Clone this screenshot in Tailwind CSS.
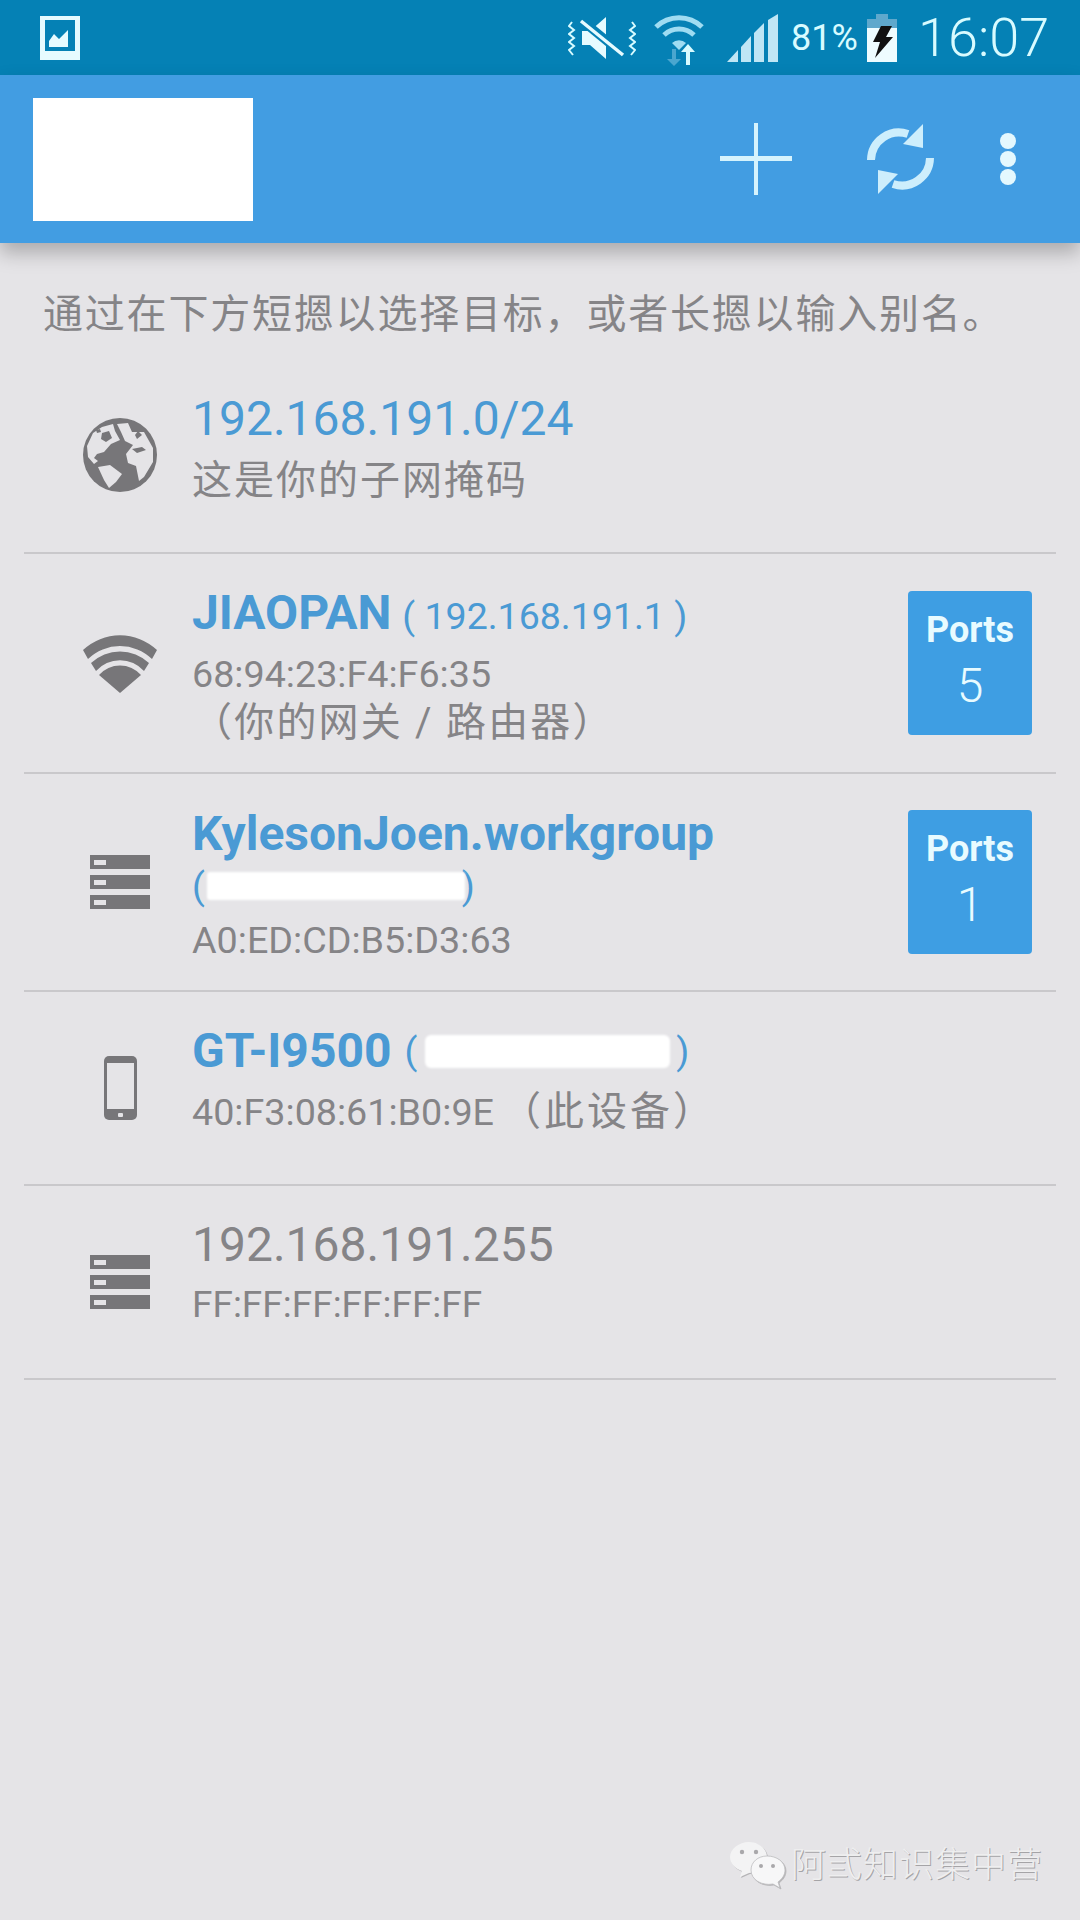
<!DOCTYPE html>
<html lang="zh-CN">

<head>
    <meta charset="UTF-8">
    <meta name="viewport" content="width=device-width, initial-scale=1.0">
    <title>网络扫描</title>
    <script src="https://cdn.jsdelivr.net/npm/@tailwindcss/browser@4"></script>
</head>

<body class="bg-[#e5e4e7] font-['Roboto','Noto_Sans_CJK_SC',sans-serif] text-[#858487]">
    <div class="relative h-[1920px] w-[1080px] overflow-hidden">

        <!-- status bar -->
        <div class="flex h-[75px] items-center bg-[#0581b5] text-[#d8fbff]">
            <svg class="ml-[40px] h-[44px] w-[40px]" viewBox="0 0 40 44">
                <rect width="40" height="44" fill="#e6fbff" />
                <rect x="5" y="4" width="30" height="31" fill="#0581b5" />
                <path d="M9 31v-6l5-7 5 5 9-9v17z" fill="#e6fbff" />
            </svg>
            <svg class="ml-[488px] h-[44px] w-[68px]" viewBox="0 0 68 44" fill="none">
                <path d="M4 6l-3 4 5 4-5 4 5 4-5 4 5 4-5 4 4 5M64 6l3 4-5 4 5 4-5 4 5 4-5 4 5 4-4 5" stroke="#d8fbff" stroke-width="2" />
                <path d="M14 15h8l16-14v42L22 29h-8z" fill="#e6fbff" />
                <path d="M12 3l44 36" stroke="#0581b5" stroke-width="9" />
                <path d="M13 5l42 34" stroke="#e6fbff" stroke-width="3.5" />
            </svg>
            <svg class="ml-[18px] h-[56px] w-[50px]" viewBox="0 0 50 56" fill="none">
                <path d="M2 17a33 33 0 0 1 46 0" stroke="#9fdcf2" stroke-width="5" />
                <path d="M10 25a22 22 0 0 1 30 0" stroke="#9fdcf2" stroke-width="5" />
                <path d="M18 33a10 10 0 0 1 14 0l-7 7z" fill="#9fdcf2" />
                <path d="M18 39v10h-5l7 7 7-7h-5V39z" fill="#4aa6cf" />
                <path d="M32 55V42h-5l7-8 7 8h-5v13z" fill="#d8fbff" />
            </svg>
            <svg class="ml-[23px] h-[48px] w-[53px]" viewBox="0 0 53 48">
                <path d="M0 48l11-12v12z" fill="#bfe6f5" />
                <path d="M14 33l10-11v26H14z" fill="#bfe6f5" />
                <path d="M27 19l10-10v39H27z" fill="#bfe6f5" />
                <path d="M41 6l10-6v48H41z" fill="#bfe6f5" />
            </svg>
            <span class="ml-[11px] w-[65px] text-[36px] leading-none">81%</span>
            <svg class="ml-[11px] h-[48px] w-[30px]" viewBox="0 0 30 48">
                <rect x="9" y="0" width="12" height="6" fill="#5fa8cc" />
                <rect x="0" y="5" width="30" height="9" fill="#5fa8cc" />
                <rect x="0" y="14" width="30" height="34" fill="#eefcff" />
                <path d="M14 12h11l-6 11h7L8 44l5-16H6z" fill="#111" />
            </svg>
            <span class="ml-[21px] text-[54px] leading-none font-light">16:07</span>
        </div>

        <!-- app bar -->
        <div class="relative z-10 flex h-[168px] items-center bg-[#429de2] shadow-[0_10px_18px_rgba(0,0,0,0.25)]">
            <div class="ml-[33px] h-[123px] w-[220px] bg-white"></div>
            <svg class="ml-[467px] h-[72px] w-[72px]" viewBox="0 0 72 72" fill="#d5f3fd">
                <rect x="34" y="0" width="4" height="72" />
                <rect x="0" y="33" width="72" height="5" />
            </svg>
            <svg class="ml-[74px] h-[72px] w-[69px]" viewBox="0 0 69 72" fill="none">
                <path d="M5 37A28 28 0 0 1 42 11" stroke="#cdeefc" stroke-width="8" />
                <path d="M57 1v24l-20-4z" fill="#cdeefc" />
                <path d="M64 35A28 28 0 0 1 27 61" stroke="#cdeefc" stroke-width="8" />
                <path d="M12 71V47l20 4z" fill="#cdeefc" />
            </svg>
            <div class="ml-[65px] flex flex-col gap-[2px]">
                <div class="h-[16px] w-[16px] rounded-full bg-[#e4f8fe]"></div>
                <div class="h-[16px] w-[16px] rounded-full bg-[#e4f8fe]"></div>
                <div class="h-[16px] w-[16px] rounded-full bg-[#e4f8fe]"></div>
            </div>
        </div>

        <!-- hint -->
        <p class="h-[115px] pt-[52px] pl-[43px] text-[40px] leading-[40px] tracking-[1.8px] whitespace-nowrap">通过在下方短摁以选择目标，或者长摁以输入别名。</p>

        <!-- host list -->
        <div class="mx-[24px]">
            <div class="flex h-[196px] border-b-2 border-[#c9c8cb]">
                <div class="flex w-[168px] shrink-0 items-center justify-center pl-[24px]">
                    <svg class="h-[74px] w-[74px]" viewBox="23 19 74 74">
                        <circle cx="60" cy="56" r="37" fill="#777679" />
                        <path d="M27 47l6-13 9-6 11-3 2 7 5 9-9 4-7 8-7 2-3 4 4 3-4 3-6-7z" fill="#e5e4e7" />
                        <path d="M57 25l11-1 4 9 12 0 9 16v14l-9 15-5 4-3-15-8-3-2-9 7-9-8-4-4-9z" fill="#e5e4e7" />
                        <path d="M38 68l12-2 12 9-6 8-7 6-5-8z" fill="#e5e4e7" />
                        <path d="M42 34l7-2 3 7-6 4-5-3zM72 50l10-2 4 3-9 3zM36 31l4-1 1 3-4 1zM78 32l4 4-5 4-2-4z" fill="#777679" />
                    </svg>
                </div>
                <div class="flex-1 pt-[30px]">
                    <div class="text-[48px] leading-[62px] text-[#4a9ad4]">192.168.191.0/24</div>
                    <div class="text-[40px] leading-[62px] tracking-[2px]">这是你的子网掩码</div>
                </div>
            </div>

            <div class="flex h-[220px] items-center border-b-2 border-[#c9c8cb]">
                <div class="flex w-[168px] shrink-0 justify-center pl-[24px]">
                    <svg class="h-[60px] w-[74px]" viewBox="0 0 74 60">
                        <path d="M0 17a54 54 0 0 1 74 0l-5 9A46 46 0 0 0 5 26z" fill="#777679" />
                        <path d="M8 30a42 42 0 0 1 58 0l-5 8a32 32 0 0 0-48 0z" fill="#777679" />
                        <path d="M16 42a28 28 0 0 1 42 0L37 60z" fill="#777679" />
                    </svg>
                </div>
                <div class="flex-1 self-start pt-[29px]">
                    <div class="h-[60px] leading-[60px] whitespace-nowrap text-[#4a9ad4]">
                        <span class="text-[48px] font-bold">JIAOPAN</span>
                        <span class="ml-[7px] text-[37.5px]">( 192.168.191.1 )</span>
                    </div>
                    <div class="text-[37.7px] leading-[62px]">68:94:23:F4:F6:35</div>
                    <div class="text-[40px] leading-[36px] tracking-[2.2px] whitespace-pre">（你的网关 / 路由器）</div>
                </div>
                <div class="mr-[24px] flex h-[144px] w-[124px] flex-col items-center rounded-[4px] bg-[#3e9ee3] pt-[14px] text-[#e8fbff]">
                    <span class="text-[36px] leading-[50px] font-bold">Ports</span>
                    <span class="text-[48px] leading-[62px] font-light">5</span>
                </div>
            </div>

            <div class="flex h-[218px] items-center border-b-2 border-[#c9c8cb]">
                <div class="flex w-[168px] shrink-0 justify-center pl-[24px]">
                    <svg class="h-[54px] w-[60px]" viewBox="0 0 60 54">
                        <path d="M0 0h60v14H0zM0 20h60v14H0zM0 40h60v14H0z" fill="#777679" />
                        <path d="M4 5h12v5H4zM4 25h12v5H4zM4 45h12v5H4z" fill="#e5e4e7" />
                    </svg>
                </div>
                <div class="flex-1 self-start pt-[32px]">
                    <div class="text-[48px] leading-[56px] font-bold text-[#4a9ad4]">KylesonJoen.workgroup</div>
                    <div class="flex h-[48px] items-center text-[37.5px] leading-[48px] text-[#4a9ad4]">
                        <span>(</span>
                        <span class="ml-[2px] h-[28px] w-[258px] rounded-[3px] bg-white blur-[1px]"></span>
                        <span class="-ml-[3px]">)</span>
                    </div>
                    <div class="text-[37.7px] leading-[60px]">A0:ED:CD:B5:D3:63</div>
                </div>
                <div class="mr-[24px] flex h-[144px] w-[124px] flex-col items-center rounded-[4px] bg-[#3e9ee3] pt-[14px] text-[#e8fbff]">
                    <span class="text-[36px] leading-[50px] font-bold">Ports</span>
                    <span class="text-[48px] leading-[62px] font-light">1</span>
                </div>
            </div>

            <div class="flex h-[194px] items-center border-b-2 border-[#c9c8cb]">
                <div class="flex w-[168px] shrink-0 justify-center pl-[24px]">
                    <svg class="h-[64px] w-[33px]" viewBox="0 0 33 64">
                        <rect width="33" height="64" rx="5" fill="#777679" />
                        <rect x="3" y="7" width="27" height="46" fill="#e5e4e7" />
                        <rect x="14" y="57" width="5" height="4" rx="1" fill="#e5e4e7" />
                    </svg>
                </div>
                <div class="flex-1 self-start pt-[29px]">
                    <div class="flex h-[60px] items-center whitespace-nowrap text-[#4a9ad4]">
                        <span class="text-[48px] font-bold">GT-I9500</span>
                        <span class="ml-[13px] text-[37.5px]">(</span>
                        <span class="ml-[8px] h-[33px] w-[245px] rounded-[6px] bg-white blur-[1px]"></span>
                        <span class="ml-[6px] text-[37.5px]">)</span>
                    </div>
                    <div class="text-[37.7px] leading-[62px]">40:F3:08:61:B0:9E<span class="ml-[7px] text-[40px] tracking-[3px]">（此设备）</span></div>
                </div>
            </div>

            <div class="flex h-[194px] items-center border-b-2 border-[#c9c8cb]">
                <div class="flex w-[168px] shrink-0 justify-center pl-[24px]">
                    <svg class="h-[54px] w-[60px]" viewBox="0 0 60 54">
                        <path d="M0 0h60v14H0zM0 20h60v14H0zM0 40h60v14H0z" fill="#777679" />
                        <path d="M4 5h12v5H4zM4 25h12v5H4zM4 45h12v5H4z" fill="#e5e4e7" />
                    </svg>
                </div>
                <div class="flex-1 self-start pt-[29px]">
                    <div class="text-[48px] leading-[60px]">192.168.191.255</div>
                    <div class="text-[37px] leading-[60px]">FF:FF:FF:FF:FF:FF</div>
                </div>
            </div>
        </div>

        <!-- watermark over the page -->
        <div class="absolute top-[1842px] left-[730px] flex items-center">
            <svg class="h-[48px] w-[56px] drop-shadow-[1px_1px_0_#b5b4b7]" viewBox="0 0 56 48">
                <path d="M19 0c10 0 18 7 18 15S29 31 19 31l-9 4 2-6C5 27 0 21 0 15 0 7 9 0 19 0z" fill="#f3f3f4" />
                <path d="M37 14c10 0 18 6 18 14 0 5-3 9-7 12l2 6-7-4c-11 2-22-4-22-14 0-8 7-14 16-14z" fill="#f7f7f8" stroke="#bdbcbf" stroke-width="0.8" />
                <circle cx="12" cy="10" r="2.2" fill="#a9a8ab" />
                <circle cx="26" cy="10" r="2.2" fill="#a9a8ab" />
                <circle cx="31" cy="24" r="2" fill="#a9a8ab" />
                <circle cx="43" cy="24" r="2" fill="#a9a8ab" />
            </svg>
            <span class="ml-[5px] text-[35px] leading-[40px] font-light tracking-[1px] whitespace-nowrap text-[#eeeeef] [text-shadow:1px_1px_0_#a5a4a7]">阿弎知识集中营</span>
        </div>
    </div>
</body>

</html>
